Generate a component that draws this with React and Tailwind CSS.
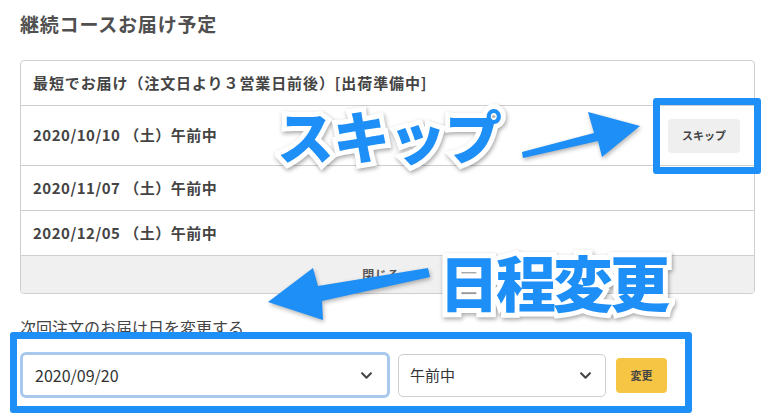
import * as React from "react";
import { FaChevronDown, FaChevronUp } from "react-icons/fa";

const rows = ["2020/11/07 （土）午前中", "2020/12/05 （土）午前中"];

function BigLabel({ children, className }) {
  return (
    <div
      className={`absolute font-black text-[#1e8ff7] leading-none [paint-order:stroke_fill] [-webkit-text-stroke:10px_white] [filter:drop-shadow(1px_2px_2px_rgba(0,0,0,0.35))] ${className}`}
    >
      {children}
    </div>
  );
}

export default function App() {
  return (
    <div className="relative w-[775px] h-[415px] overflow-hidden bg-white text-[#444] font-['Noto_Sans_CJK_JP','Noto_Sans',sans-serif]">
      {/* Title */}
      <div className="h-12 flex items-center px-5">
        <h2 className="text-[19px] tracking-[0.8px] font-bold text-[#505050]">継続コースお届け予定</h2>
      </div>

      {/* Schedule card */}
      <div className="mx-5 mt-3 border border-[#cfcfcf] rounded overflow-hidden text-[15px] tracking-[0.5px] font-bold">
        <div className="h-[45px] flex items-center px-3 border-b border-[#cfcfcf] tracking-[0.9px]">
          最短でお届け（注文日より３営業日前後）[出荷準備中]
        </div>
        <div className="h-[60px] flex items-center justify-between pl-3 pr-[14px] border-b border-[#cfcfcf]">
          <span>2020/10/10 （土）午前中</span>
          <button className="w-[72px] h-[34px] rounded bg-[#efefef] text-[11px] tracking-normal font-bold text-[#444]">
            スキップ
          </button>
        </div>
        {rows.map((r) => (
          <div key={r} className="h-[45px] flex items-center px-3 border-b border-[#cfcfcf]">
            {r}
          </div>
        ))}
        <div className="h-[37px] flex items-center justify-center gap-1 bg-[#f0f0f0] text-[12px] text-[#555]">
          閉じる <FaChevronUp className="text-[9px]" />
        </div>
      </div>

      {/* Change next order */}
      <div className="px-5 mt-[23px] text-[16px] leading-5 text-[#444]">次回注文のお届け日を変更する</div>
      <div className="flex items-center px-5 mt-[15px]">
        <div className="w-[370px] h-[46px] flex items-center justify-between pl-3 pr-[14px] border-[3px] border-[#a9c9ec] rounded-[6px] text-[16px] text-[#333]">
          <span>2020/09/20</span>
          <FaChevronDown className="text-[13px] text-[#444]" />
        </div>
        <div className="ml-2 w-[208px] h-[43px] flex items-center justify-between pl-[11px] pr-[13px] border border-[#cfcfcf] rounded-[5px] text-[15px] text-[#333]">
          <span>午前中</span>
          <FaChevronDown className="text-[13px] text-[#444]" />
        </div>
        <button className="ml-[10px] w-[51px] h-[35px] rounded bg-[#f6c544] text-[11px] font-bold text-[#444]">
          変更
        </button>
      </div>

      {/* Annotation boxes */}
      <div className="absolute left-[653px] top-[98px] w-[108px] h-[76px] border-[7px] border-[#1e8ff7] rounded-[3px]" />
      <div className="absolute left-[10px] top-[332px] w-[682px] h-[81px] border-[7px] border-[#1e8ff7] rounded-[3px]" />

      {/* Arrows */}
      <svg className="absolute left-0 top-0 pointer-events-none [filter:drop-shadow(1px_2px_2px_rgba(0,0,0,0.3))]" width="775" height="415">
        <polygon
          points="522,152 594,133 588,112 640,126 602,157 598,141 523,158"
          fill="#1e8ff7"
        />
        <polygon
          points="268,302 313,268 318,286 428,268 430,277 322,301 323,320"
          fill="#1e8ff7"
        />
      </svg>

      {/* Big annotation labels */}
      <BigLabel className="left-[277px] top-[106px] text-[57px] tracking-[-1px]">スキップ</BigLabel>
      <BigLabel className="left-[439px] top-[251px] text-[60px] tracking-[-3px]">日程変更</BigLabel>
    </div>
  );
}
